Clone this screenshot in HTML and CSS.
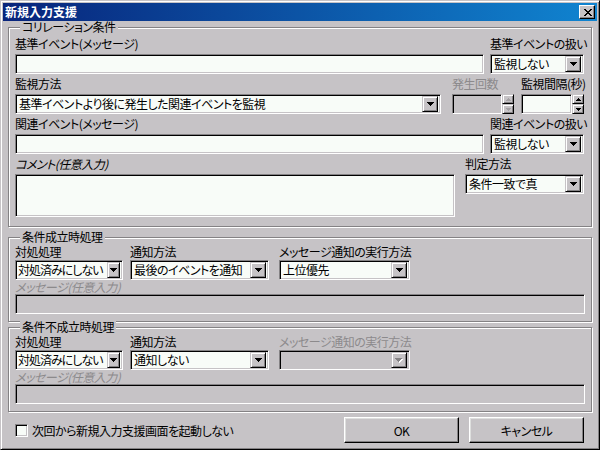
FILE: index.html
```html
<!DOCTYPE html>
<html lang="ja">
<head>
<meta charset="utf-8">
<title>新規入力支援</title>
<link rel="stylesheet" href="styles.css">
</head>
<body>
<div class="window">
  <div class="titlebar">
    <span class="title">新規入力支援</span>
    <div class="close">
      <svg width="8" height="7" viewBox="0 0 8 7" shape-rendering="crispEdges"><path d="M0 0h2v1H0zM6 0h2v1H6zM1 1h2v1H1zM5 1h2v1H5zM2 2h4v1H2zM3 3h2v1H3zM2 4h4v1H2zM1 5h2v1H1zM5 5h2v1H5zM0 6h2v1H0zM6 6h2v1H6z" fill="#000"/></svg>
    </div>
  </div>
  <div class="client">
    <section class="group g1">
      <div class="gtitle">コリレーション条件</div>
      <div class="row">
        <div class="field grow"><label>基準イベント(メッセージ)</label><div class="edit"></div></div>
        <div class="field w-handle"><label>基準イベントの扱い</label>
          <div class="combo"><span class="val">監視しない</span><span class="drop"><svg width="7" height="4" viewBox="0 0 7 4" shape-rendering="crispEdges"><path d="M0 0h7v1H0zM1 1h5v1H1zM2 2h3v1H2zM3 3h1v1H3z"/></svg></span></div>
        </div>
      </div>
      <div class="row">
        <div class="field grow"><label>監視方法</label>
          <div class="combo"><span class="val">基準イベントより後に発生した関連イベントを監視</span><span class="drop"><svg width="7" height="4" viewBox="0 0 7 4" shape-rendering="crispEdges"><path d="M0 0h7v1H0zM1 1h5v1H1zM2 2h3v1H2zM3 3h1v1H3z"/></svg></span></div>
        </div>
        <div class="field w-count"><label class="disabled">発生回数</label>
          <div class="spin">
            <div class="edit off"></div>
            <div class="arrows">
              <span class="sbtn"><svg width="5" height="3" viewBox="0 0 5 3" shape-rendering="crispEdges"><path d="M2 0h1v1H2zM1 1h3v1H1zM0 2h5v1H0z" fill="#a5a2a5"/></svg></span>
              <span class="sbtn"><svg width="5" height="3" viewBox="0 0 5 3" shape-rendering="crispEdges"><path d="M0 0h5v1H0zM1 1h3v1H1zM2 2h1v1H2z" fill="#a5a2a5"/></svg></span>
            </div>
          </div>
        </div>
        <div class="field w-interval"><label>監視間隔(秒)</label>
          <div class="spin">
            <div class="edit"></div>
            <div class="arrows">
              <span class="sbtn"><svg width="5" height="3" viewBox="0 0 5 3" shape-rendering="crispEdges"><path d="M2 0h1v1H2zM1 1h3v1H1zM0 2h5v1H0z"/></svg></span>
              <span class="sbtn"><svg width="5" height="3" viewBox="0 0 5 3" shape-rendering="crispEdges"><path d="M0 0h5v1H0zM1 1h3v1H1zM2 2h1v1H2z"/></svg></span>
            </div>
          </div>
        </div>
      </div>
      <div class="row">
        <div class="field grow"><label>関連イベント(メッセージ)</label><div class="edit"></div></div>
        <div class="field w-handle"><label>関連イベントの扱い</label>
          <div class="combo"><span class="val">監視しない</span><span class="drop"><svg width="7" height="4" viewBox="0 0 7 4" shape-rendering="crispEdges"><path d="M0 0h7v1H0zM1 1h5v1H1zM2 2h3v1H2zM3 3h1v1H3z"/></svg></span></div>
        </div>
      </div>
      <div class="row">
        <div class="field w-comment"><label class="italic">コメント(任意入力)</label><div class="edit memo"></div></div>
        <div class="field w-judge"><label>判定方法</label>
          <div class="combo"><span class="val">条件一致で真</span><span class="drop"><svg width="7" height="4" viewBox="0 0 7 4" shape-rendering="crispEdges"><path d="M0 0h7v1H0zM1 1h5v1H1zM2 2h3v1H2zM3 3h1v1H3z"/></svg></span></div>
        </div>
      </div>
    </section>

    <section class="group act g2">
      <div class="gtitle">条件成立時処理</div>
      <div class="row">
        <div class="field c1"><label>対処処理</label>
          <div class="combo tight"><span class="val">対処済みにしない</span><span class="drop"><svg width="7" height="4" viewBox="0 0 7 4" shape-rendering="crispEdges"><path d="M0 0h7v1H0zM1 1h5v1H1zM2 2h3v1H2zM3 3h1v1H3z"/></svg></span></div>
        </div>
        <div class="field c2"><label>通知方法</label>
          <div class="combo"><span class="val">最後のイベントを通知</span><span class="drop"><svg width="7" height="4" viewBox="0 0 7 4" shape-rendering="crispEdges"><path d="M0 0h7v1H0zM1 1h5v1H1zM2 2h3v1H2zM3 3h1v1H3z"/></svg></span></div>
        </div>
        <div class="field c3"><label>メッセージ通知の実行方法</label>
          <div class="combo"><span class="val">上位優先</span><span class="drop"><svg width="7" height="4" viewBox="0 0 7 4" shape-rendering="crispEdges"><path d="M0 0h7v1H0zM1 1h5v1H1zM2 2h3v1H2zM3 3h1v1H3z"/></svg></span></div>
        </div>
      </div>
      <div class="msglabel">メッセージ(任意入力)</div>
      <div class="edit off"></div>
    </section>

    <section class="group act g3">
      <div class="gtitle">条件不成立時処理</div>
      <div class="row">
        <div class="field c1"><label>対処処理</label>
          <div class="combo tight"><span class="val">対処済みにしない</span><span class="drop"><svg width="7" height="4" viewBox="0 0 7 4" shape-rendering="crispEdges"><path d="M0 0h7v1H0zM1 1h5v1H1zM2 2h3v1H2zM3 3h1v1H3z"/></svg></span></div>
        </div>
        <div class="field c2"><label>通知方法</label>
          <div class="combo"><span class="val">通知しない</span><span class="drop"><svg width="7" height="4" viewBox="0 0 7 4" shape-rendering="crispEdges"><path d="M0 0h7v1H0zM1 1h5v1H1zM2 2h3v1H2zM3 3h1v1H3z"/></svg></span></div>
        </div>
        <div class="field c3"><label class="disabled">メッセージ通知の実行方法</label>
          <div class="combo off"><span class="val"></span><span class="drop"><svg width="8" height="5" viewBox="0 0 8 5" shape-rendering="crispEdges"><path d="M1 1h7v1H1zM2 2h5v1H2zM3 3h3v1H3zM4 4h1v1H4z" fill="#fff"/><path d="M0 0h7v1H0zM1 1h5v1H1zM2 2h3v1H2zM3 3h1v1H3z" fill="#848284"/></svg></span></div>
        </div>
      </div>
      <div class="msglabel">メッセージ(任意入力)</div>
      <div class="edit off"></div>
    </section>

    <div class="footer">
      <div class="check"><span class="box"></span><span>次回から新規入力支援画面を起動しない</span></div>
      <div class="buttons">
        <div class="btn">OK</div>
        <div class="btn">キャンセル</div>
      </div>
    </div>
  </div>
</div>
</body>
</html>
```

FILE: styles.css
```css
* { box-sizing: border-box; }
html, body { margin: 0; padding: 0; }
body {
  width: 600px;
  height: 450px;
  background: #c6c3c6;
  font-family: "Noto Sans CJK JP", "Noto Sans", sans-serif;
  font-size: 12px;
  letter-spacing: -0.5px;
  color: #000;
  font-feature-settings: "palt" 1;
  overflow: hidden;
}

.window {
  width: 600px;
  height: 450px;
  border: 1px solid;
  border-color: #c6c3c6 #000 #000 #c6c3c6;
  box-shadow: inset 1px 1px 0 #fff, inset -1px -1px 0 #848284;
  padding: 2px;
  background: #c6c3c6;
  display: flex;
  flex-direction: column;
}

.titlebar {
  height: 18px;
  flex: none;
  background: linear-gradient(90deg, #08247b 0%, #1084d0 100%);
  display: flex;
  align-items: center;
  padding: 0 2px 0 2px;
  color: #fff;
  font-weight: bold;
}
.title { flex: 1; line-height: 18px; letter-spacing: 0; }
.close {
  width: 16px;
  height: 14px;
  background: #c6c3c6;
  border: 1px solid;
  border-color: #fff #000 #000 #fff;
  box-shadow: inset -1px -1px 0 #848284;
  display: flex;
  align-items: center;
  justify-content: center;
  padding-left: 1px;
}
.close svg { display: block; }

.client {
  flex: 1;
  padding: 0 5px;
  display: flex;
  flex-direction: column;
}

/* group boxes */
.group {
  position: relative;
  border: 1px solid #848284;
  box-shadow: inset 1px 1px 0 #fff, 1px 1px 0 #fff;
}
.gtitle {
  position: absolute;
  top: -7px;
  left: 11px;
  padding: 0 2px;
  background: #c6c3c6;
  line-height: 12px;
  white-space: nowrap;
}
.g1 { margin-top: 6px; padding: 6px 7px 9px 6px; height: 200px; }
.act { padding: 2px 6px 7px 6px; height: 85px; }
.g2 { margin-top: 10px; }
.g3 { margin-top: 5px; }

.row { display: flex; }
.field { display: flex; flex-direction: column; }
.field label {
  height: 20px;
  line-height: 14px;
  padding-top: 3px;
  white-space: nowrap;
}
.act .field label { padding-top: 5px; line-height: 14px; }
.grow { flex: 1; min-width: 0; }
.disabled { color: #8c8a8c; }
.italic { font-style: italic; }

.g1 .w-handle { width: 94px; margin-left: 6px; }
.g1 .w-count { width: 62px; margin-left: 11px; }
.g1 .w-interval { width: 63px; margin-left: 7px; }
.g1 .w-comment { width: 440px; }
.g1 .w-judge { width: 119px; margin-left: 10px; }

.act .c1 { width: 108px; }
.act .c2 { width: 139px; margin-left: 7px; }
.act .c3 { width: 131px; margin-left: 10px; }

.msglabel {
  height: 14px;
  line-height: 14px;
  color: #8c8a8c;
  font-style: italic;
}

/* controls */
.edit {
  height: 20px;
  background: #f8fcf8;
  border: 1px solid;
  border-color: #848284 #fff #fff #848284;
  box-shadow: inset 1px 1px 0 #000, inset -1px -1px 0 #c6c3c6;
}
.edit.off { background: #c6c3c6; }
.edit.memo { height: 43px; }

.combo {
  height: 20px;
  background: #f8fcf8;
  border: 1px solid;
  border-color: #848284 #fff #fff #848284;
  box-shadow: inset 1px 1px 0 #000, inset -1px -1px 0 #c6c3c6;
  padding: 2px 2px 2px 3px;
  display: flex;
  align-items: center;
}
.combo.off { background: #c6c3c6; }
.combo .val {
  flex: 1;
  min-width: 0;
  white-space: nowrap;
  overflow: hidden;
  line-height: 16px;
}
.combo.tight { padding-left: 2px; }
.combo.tight .val { letter-spacing: -1px; overflow: visible; }
.combo.tight .drop { width: 13px; }
.drop {
  width: 16px;
  height: 16px;
  flex: none;
  background: #c6c3c6;
  border: 1px solid;
  border-color: #c6c3c6 #000 #000 #c6c3c6;
  box-shadow: inset 1px 1px 0 #fff, inset -1px -1px 0 #848284;
  display: flex;
  align-items: center;
  justify-content: center;
}
.drop svg { display: block; fill: #000; }

.spin { display: flex; height: 20px; }
.spin .edit { flex: 1; }
.arrows {
  width: 12px;
  display: flex;
  flex-direction: column;
}
.sbtn {
  flex: 1;
  background: #c6c3c6;
  border: 1px solid;
  border-color: #c6c3c6 #000 #000 #c6c3c6;
  box-shadow: inset 1px 1px 0 #fff, inset -1px -1px 0 #848284;
  display: flex;
  align-items: center;
  justify-content: center;
}
.sbtn svg { display: block; fill: #000; }

/* footer */
.footer {
  margin-top: 5px;
  height: 26px;
  display: flex;
  align-items: center;
  padding: 0 8px 0 7px;
}
.check {
  flex: 1;
  display: flex;
  align-items: center;
  gap: 4px;
}
.box {
  width: 13px;
  height: 13px;
  background: #f8fcf8;
  border: 1px solid;
  border-color: #848284 #fff #fff #848284;
  box-shadow: inset 1px 1px 0 #000, inset -1px -1px 0 #c6c3c6;
}
.buttons { display: flex; gap: 10px; }
.btn {
  width: 115px;
  height: 26px;
  border: 1px solid;
  border-color: #fff #000 #000 #fff;
  box-shadow: inset -1px -1px 0 #848284, inset 1px 1px 0 #dedfde;
  display: flex;
  align-items: center;
  justify-content: center;
}
```
